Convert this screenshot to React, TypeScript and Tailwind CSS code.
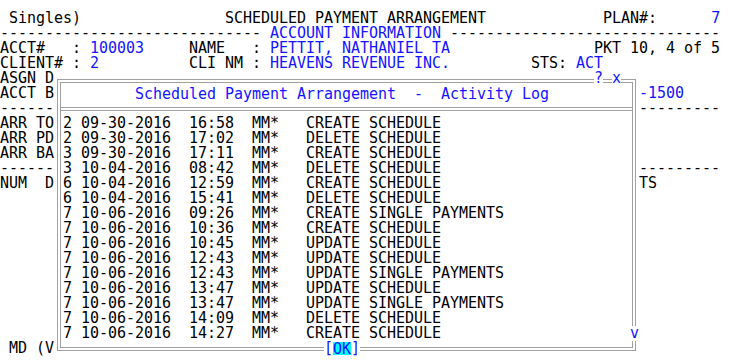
const BLUE = "text-[#1414ff]"

type Seg = [number, string, boolean?]

// one terminal row: segments placed at a column
function Row({ segs }: { segs: Seg[] }) {
  let col = 0
  const out: React.ReactNode[] = []
  segs.forEach(([c, text, blue], i) => {
    if (c > col) out.push(<span key={"s" + i}>{" ".repeat(c - col)}</span>)
    out.push(
      <span key={i} className={blue ? BLUE : ""}>
        {text}
      </span>,
    )
    col = Math.max(col, c) + text.length
  })
  return <div className="h-[15px] leading-[15px] whitespace-pre">{out.length ? out : " "}</div>
}

const screen: Seg[][] = [
  [[1, "Singles)"], [25, "SCHEDULED PAYMENT ARRANGEMENT"], [67, "PLAN#:"], [79, "7", true]],
  [[0, "-".repeat(29)], [30, "ACCOUNT INFORMATION", true], [50, "-".repeat(30)]],
  [[0, "ACCT#   : "], [10, "100003", true], [21, "NAME   : "], [30, "PETTIT, NATHANIEL TA", true], [66, "PKT 10, 4 of 5"]],
  [[0, "CLIENT# : "], [10, "2", true], [21, "CLI NM : "], [30, "HEAVENS REVENUE INC.", true], [59, "STS: "], [64, "ACT", true]],
  [[0, "ASGN D"]],
  [[0, "ACCT B"], [71, "-1500", true]],
  [[0, "------"], [71, "---------"]],
  [[0, "ARR TO"]],
  [[0, "ARR PD"]],
  [[0, "ARR BA"]],
  [[0, "------"], [71, "---------"]],
  [[0, "NUM  D"], [71, "TS"]],
  [], [], [], [], [], [], [], [], [], [],
  [[1, "MD (V"]],
]

const log = [
  ["2", "09-30-2016", "16:58", "CREATE SCHEDULE"],
  ["2", "09-30-2016", "17:02", "DELETE SCHEDULE"],
  ["3", "09-30-2016", "17:11", "CREATE SCHEDULE"],
  ["3", "10-04-2016", "08:42", "DELETE SCHEDULE"],
  ["6", "10-04-2016", "12:59", "CREATE SCHEDULE"],
  ["6", "10-04-2016", "15:41", "DELETE SCHEDULE"],
  ["7", "10-06-2016", "09:26", "CREATE SINGLE PAYMENTS"],
  ["7", "10-06-2016", "10:36", "CREATE SCHEDULE"],
  ["7", "10-06-2016", "10:45", "UPDATE SCHEDULE"],
  ["7", "10-06-2016", "12:43", "UPDATE SCHEDULE"],
  ["7", "10-06-2016", "12:43", "UPDATE SINGLE PAYMENTS"],
  ["7", "10-06-2016", "13:47", "UPDATE SCHEDULE"],
  ["7", "10-06-2016", "13:47", "UPDATE SINGLE PAYMENTS"],
  ["7", "10-06-2016", "14:09", "DELETE SCHEDULE"],
  ["7", "10-06-2016", "14:27", "CREATE SCHEDULE"],
]

export default function App() {
  return (
    <div
      className="relative w-[738px] h-[361px] overflow-hidden bg-white text-black text-[15px] tracking-[-0.03px] pt-[11px]"
      style={{ fontFamily: '"DejaVu Sans Mono", monospace' }}
    >
      {screen.map((segs, i) => (
        <Row key={i} segs={segs} />
      ))}

      {/* activity log window */}
      <div className="absolute left-[57px] top-[79px] w-[579px] border-[4px] border-double border-[#a0a0a0] bg-white">
        <div className="h-[28px] pt-[4px] pl-[2px] border-b-[4px] border-double border-[#a0a0a0]">
          <div className={`h-[15px] leading-[15px] whitespace-pre ${BLUE}`}>
            {"        Scheduled Payment Arrangement  -  Activity Log"}
          </div>
        </div>
        <div className="h-[236px] pt-[5px] pl-[2px]">
          {log.map(([n, d, t, a], i) => (
            <div key={i} className="h-[15px] leading-[15px] whitespace-pre">
              {`${n} ${d}  ${t}  MM*   ${a}`}
            </div>
          ))}
        </div>

        <div className={`absolute left-[533px] top-[-12px] flex whitespace-pre leading-[15px] ${BLUE}`}>
          <span className="bg-white">?</span>
          <span> </span>
          <span className="bg-white">x</span>
        </div>
        <div className={`absolute left-[569px] top-[243px] bg-white leading-[15px] ${BLUE}`}>v</div>
        <div className={`absolute left-[263px] top-[258px] flex bg-white leading-[15px] ${BLUE}`}>
          <span>[</span>
          <span className="bg-[#00ffff] h-[13px] leading-[15px] mt-[1px]">OK</span>
          <span>]</span>
        </div>
      </div>
    </div>
  )
}
